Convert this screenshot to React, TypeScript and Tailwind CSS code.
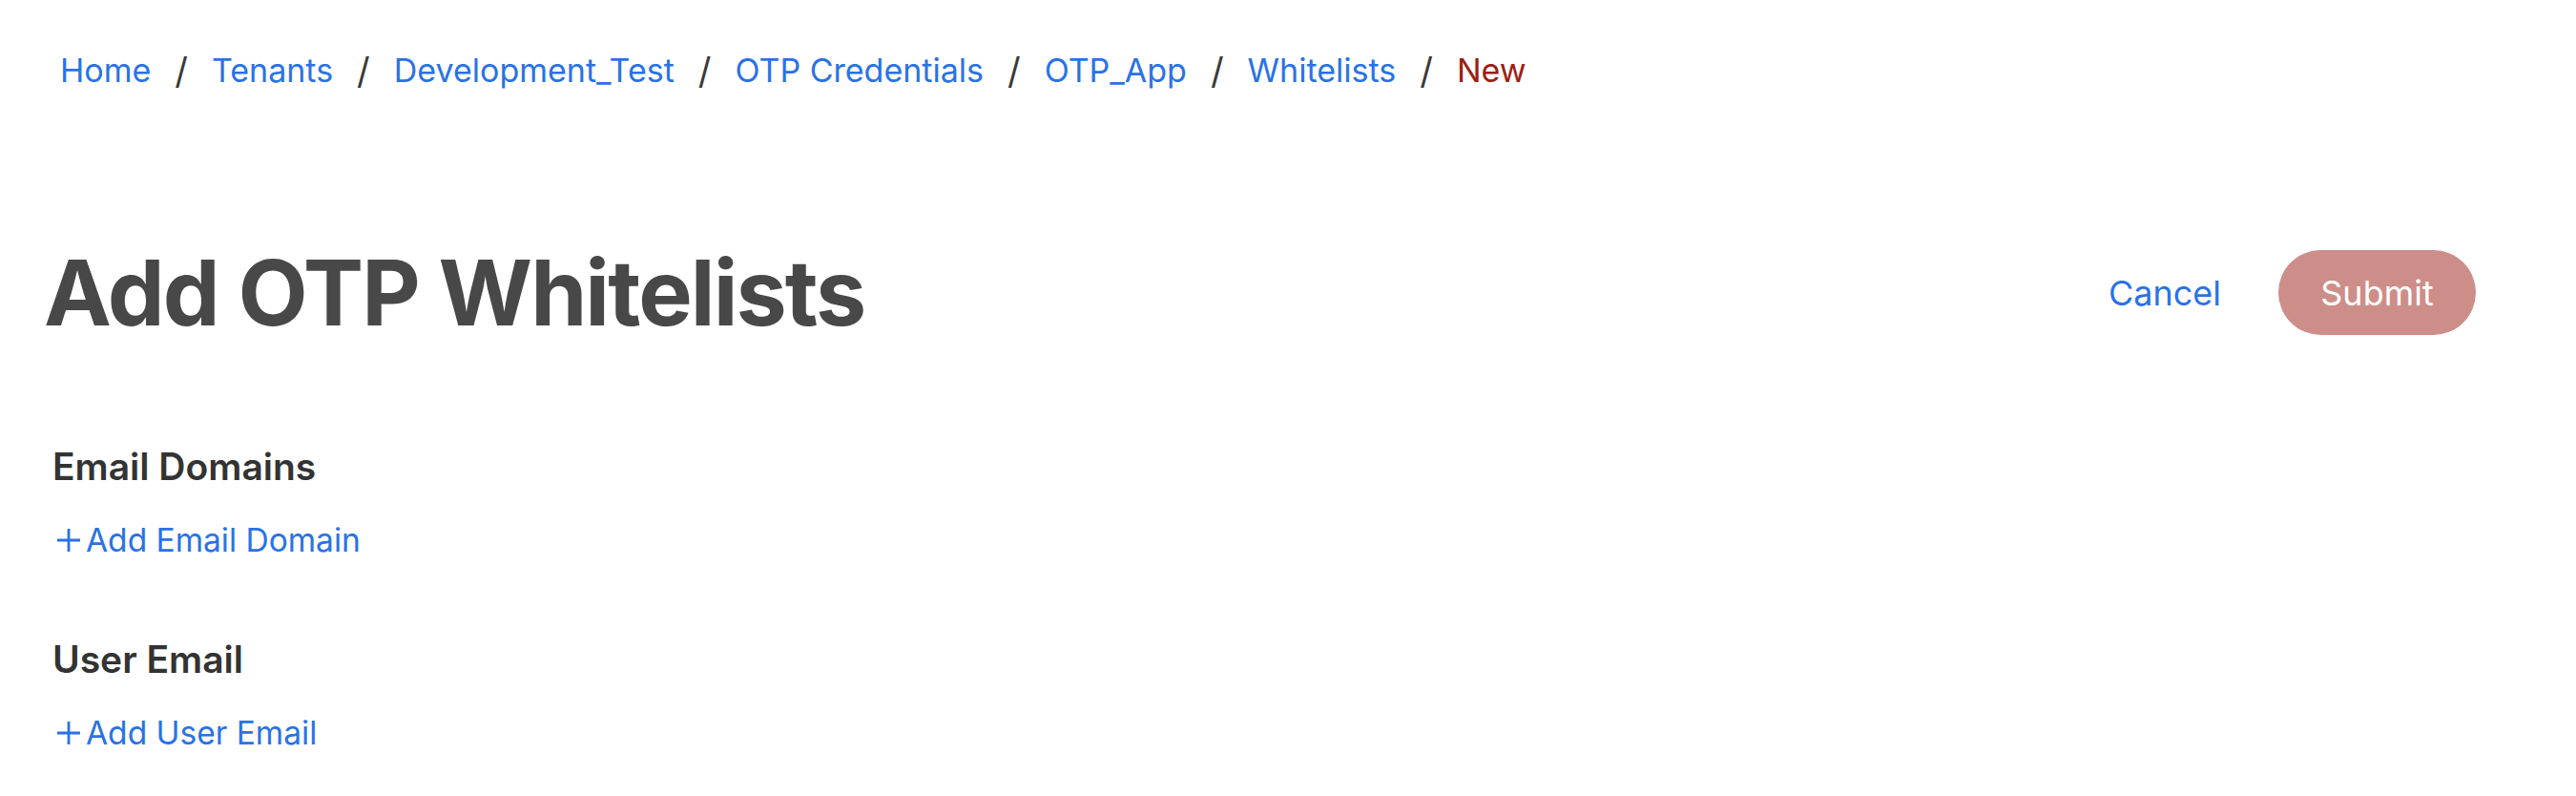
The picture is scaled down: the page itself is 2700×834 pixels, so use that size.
import React from "react";

const crumbs = ["Home", "Tenants", "Development_Test", "OTP Credentials", "OTP_App", "Whitelists"];

function Plus() {
  return (
    <svg width="28" height="28" viewBox="0 0 28 28" className="shrink-0">
      <path d="M14 2v24M2 14h24" stroke="#2a72e5" strokeWidth="2.8" strokeLinecap="butt" fill="none" />
    </svg>
  );
}

export default function App() {
  return (
    <div className="w-full h-[834px] bg-white font-['Inter',sans-serif] overflow-hidden">
      <nav className="flex items-center gap-[25px] pl-[63px] pt-[50px] h-[98px] text-[34px] leading-[48px]">
        {crumbs.map((c) => (
          <React.Fragment key={c}>
            <a className="text-[#2a72e5]">{c}</a>
            <span className="text-[#3a3a3a] text-[38px]">/</span>
          </React.Fragment>
        ))}
        <span className="text-[#9b2014]">New</span>
      </nav>

      <div className="flex items-center justify-between pl-[46px] pr-[105px] mt-[164px] h-[89px]">
        <h1 className="text-[95px] font-bold tracking-[-0.02em] text-[#484848] leading-none">Add OTP Whitelists</h1>
        <div className="flex items-center gap-[60px]">
          <button className="text-[36px] text-[#2a72e5] leading-none">Cancel</button>
          <button className="w-[207px] h-[89px] rounded-full bg-[#cd8e89] text-white text-[36px] leading-none">Submit</button>
        </div>
      </div>

      <section className="pl-[55px] mt-[114px]">
        <h2 className="text-[39px] font-semibold text-[#333333] leading-[48px]">Email Domains</h2>
        <button className="flex items-center gap-[4px] mt-[29px] h-[48px] pl-[3px] text-[33.5px] text-[#2a72e5]">
          <Plus />
          <span>Add Email Domain</span>
        </button>
      </section>

      <section className="pl-[55px] mt-[77px]">
        <h2 className="text-[39px] font-semibold text-[#333333] leading-[48px]">User Email</h2>
        <button className="flex items-center gap-[4px] mt-[29px] h-[48px] pl-[3px] text-[33.5px] text-[#2a72e5]">
          <Plus />
          <span>Add User Email</span>
        </button>
      </section>
    </div>
  );
}
